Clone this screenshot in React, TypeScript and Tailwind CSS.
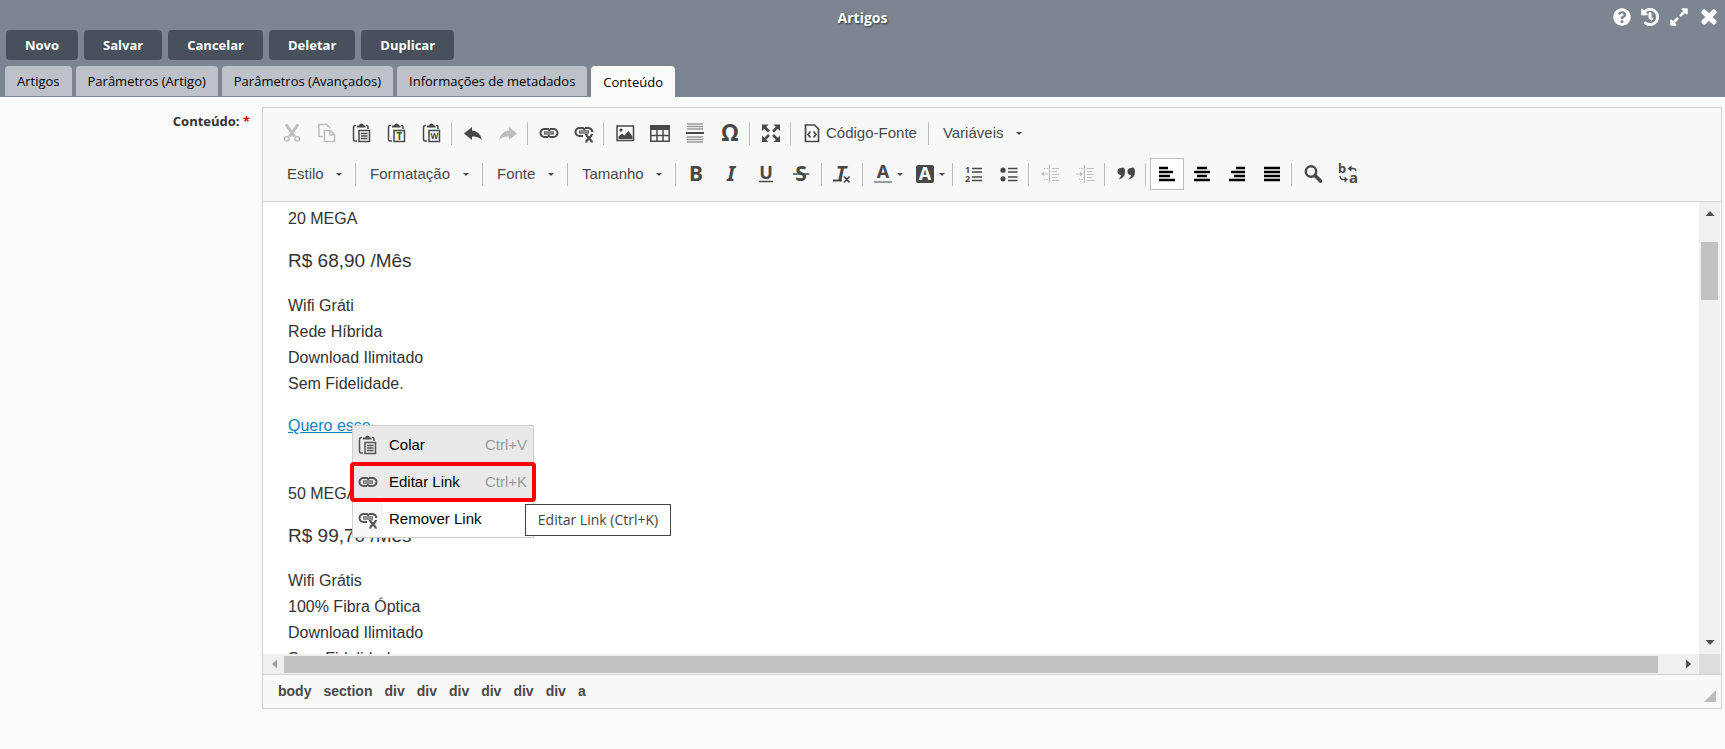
import { useState } from "react";
import type { ReactNode } from "react";
import { FaExpandAlt, FaHistory, FaQuestionCircle, FaTimes } from "react-icons/fa";

interface IconProps {
  children: ReactNode;
}

interface ToolProps {
  label: string;
  children: ReactNode;
  disabled?: boolean;
  active?: boolean;
}

const actions = ["Novo", "Salvar", "Cancelar", "Deletar", "Duplicar"];
const tabs = ["Artigos", "Parâmetros (Artigo)", "Parâmetros (Avançados)", "Informações de metadados", "Conteúdo"];
const path = ["body", "section", "div", "div", "div", "div", "div", "div", "a"];

const Icon = ({ children }: IconProps) => (
  <svg viewBox="0 0 20 20" className="h-5 w-5 shrink-0 overflow-visible" fill="none" stroke="currentColor" strokeWidth="1.5" aria-hidden="true">
    {children}
  </svg>
);

// letter icons (B, I, U, ...)
const Glyph = ({ children, italic = false, y = 16, x = 10, size = 19 }: { children: string; italic?: boolean; y?: number; x?: number; size?: number }) => (
  <text
    x={x}
    y={y}
    fontSize={size}
    textAnchor="middle"
    fontWeight="bold"
    fontStyle={italic ? "italic" : "normal"}
    fontFamily="'Noto Sans', sans-serif"
    fill="currentColor"
    stroke="none"
  >
    {children}
  </text>
);

const Clipboard = ({ children }: { children: ReactNode }) => (
  <Icon>
    <path d="M4 2.5H3.5Q1.500 2.500 1.500 4.500v12Q1.500 18 3 18h2M14 2.500h.5Q16 2.500 16 4.500V6" />
    <path d="M5 4.500V2.500h2Q7.500.5 9.500 .5t2.500 2h1.500v2z" fill="currentColor" stroke="none" />
    <path d="M7 7.500h10.500v11H7z" />
    {children}
  </Icon>
);

const PasteIcon = () => (
  <Clipboard>
    <path d="M9 10.500h6.500M9 13h6.500M9 15.500h6.500" strokeWidth="1.400" />
  </Clipboard>
);

const LinkIcon = () => (
  <Icon>
    <path d="M9 6H5.500a4 4 0 0 0 0 8H9M11 6h3.500a4 4 0 0 1 0 8H11" strokeWidth="2" />
    <path d="M8.500 6q2 .3 2 2.300M11.500 14q-2-.3-2-2.300" strokeWidth="1.800" />
    <path d="M5 10h10" strokeWidth="3.200" />
    <path d="M5.500 10h9" stroke="#ccc" strokeWidth="1" />
  </Icon>
);

const UnlinkIcon = () => (
  <Icon>
    <path d="M9 5H5.500a4 4 0 0 0 0 8H9M11 5h3.500q3.500.5 4 4" strokeWidth="2" />
    <path d="M8.500 5q2 .3 2 2.300" strokeWidth="1.800" />
    <path d="M5 9h10" strokeWidth="3.200" />
    <path d="M5.500 9h9" stroke="#ccc" strokeWidth="1" />
    <path d="M12 12l6 6.500M18 12l-6 6.500" strokeWidth="2.200" />
    <path d="M11 11.500h2.500M16.500 11.500h2.500M11 19h2.500M16.500 19h2.500" strokeWidth="1" />
  </Icon>
);

const Tool = ({ label, children, disabled, active }: ToolProps) => (
  <button
    type="button"
    title={label}
    aria-label={label}
    disabled={disabled}
    className={`flex h-8 w-[34px] shrink-0 items-center justify-center border ${
      active ? "border-[#bcbcbc] bg-white text-black" : "border-transparent"
    } ${disabled ? "text-[#bdbdbd]" : ""}`}
  >
    {children}
  </button>
);

const Sep = () => <span className="ml-px mr-[3px] h-[23px] w-px shrink-0 bg-[#bcbcbc]" />;

const Caret = () => (
  <svg viewBox="0 0 6 3" className="h-[3px] w-[6px] shrink-0" fill="currentColor" aria-hidden="true">
    <path d="M0 0h6L3 3z" />
  </svg>
);

const Combo = ({ label }: { label: string }) => (
  <div className="relative flex h-8 items-center">
    <select aria-label={label} className="h-8 cursor-default appearance-none bg-transparent pl-[10px] pr-[29px] text-[15px] leading-5 outline-none">
      <option>{label}</option>
    </select>
    <span className="pointer-events-none absolute right-[11px]">
      <Caret />
    </span>
  </div>
);

const ColorTool = ({ label, children }: { label: string; children: ReactNode }) => (
  <button type="button" title={label} aria-label={label} className="flex h-8 w-[41px] shrink-0 items-center gap-1 pl-[6px]">
    {children}
    <Caret />
  </button>
);

const lines = (d: string) => (
  <Icon>
    <path d={d} strokeWidth="2.600" />
  </Icon>
);

const MenuItem = ({ icon, label, shortcut, hover, marked }: { icon: ReactNode; label: string; shortcut?: string; hover?: boolean; marked?: boolean }) => (
  <button
    type="button"
    role="menuitem"
    className={`relative flex h-[37px] w-full items-center text-[15px] leading-5 text-black ${hover ? "bg-[#e9e9e9]" : "bg-white"} ${marked ? "z-10" : ""}`}
  >
    <span className={`flex h-full w-[30px] items-center justify-center text-[#555] ${hover ? "" : "bg-[#f8f8f8]"}`}>{icon}</span>
    <span className="pl-[6px]">{label}</span>
    <span className="ml-auto pr-[6px] text-[#9a9a9a]">{shortcut}</span>
    {marked && <span className="absolute -inset-x-[3px] -bottom-[2px] -top-px rounded-sm border-4 border-[#ff0000]" />}
  </button>
);

const ContextMenu = () => (
  <div role="menu" className="absolute left-[89px] top-[223px] w-[182px] border border-[#d1d1d1]">
    <MenuItem icon={<PasteIcon />} label="Colar" shortcut="Ctrl+V" hover />
    <MenuItem icon={<LinkIcon />} label="Editar Link" shortcut="Ctrl+K" hover marked />
    <MenuItem icon={<UnlinkIcon />} label="Remover Link" />
    <div role="tooltip" className="absolute left-[172px] top-[78px] flex h-8 w-[146px] items-center justify-center whitespace-nowrap border border-[#444] bg-white font-['Open_Sans',sans-serif] text-sm text-[#444]">
      Editar Link (Ctrl+K)
    </div>
  </div>
);

const Toolbar = () => (
  <div className="flex flex-col gap-[9px] border-b border-[#d1d1d1] bg-[#f8f8f8] pb-[11px] pt-[9px] text-[#484848]">
    <div className="flex items-center gap-px pl-3">
      <Tool label="Recortar" disabled>
        <Icon>
          <path d="M4 1.500l8.500 12M16 1.500l-8.500 12" strokeWidth="3" />
          <circle cx="4.800" cy="15.800" r="2.300" />
          <circle cx="15.200" cy="15.800" r="2.300" />
        </Icon>
      </Tool>
      <Tool label="Copiar" disabled>
        <Icon>
          <path d="M6 13.500H2V1.500h7.500L13 5M7.500 7.500h6l4 4v7h-10zM13 7.500V12h4.500" />
        </Icon>
      </Tool>
      <Tool label="Colar"><PasteIcon /></Tool>
      <Tool label="Colar como texto">
        <Clipboard><Glyph x={12.3} y={16.500} size={10}>T</Glyph></Clipboard>
      </Tool>
      <Tool label="Colar do Word">
        <Clipboard><Glyph x={12.3} y={16} size={8}>W</Glyph></Clipboard>
      </Tool>
      <Sep />
      <Tool label="Desfazer">
        <Icon><path d="M1 10.500l8-6.500v3.500q8 .5 10 9.500-4-4-10-3.500V17z" fill="currentColor" stroke="none" /></Icon>
      </Tool>
      <Tool label="Refazer" disabled>
        <Icon><path d="M19 10.500L11 4v3.500q-8 .5-10 9.500 4-4 10-3.500V17z" fill="currentColor" stroke="none" /></Icon>
      </Tool>
      <Sep />
      <Tool label="Link"><LinkIcon /></Tool>
      <Tool label="Remover link"><UnlinkIcon /></Tool>
      <Sep />
      <Tool label="Imagem">
        <Icon>
          <path d="M2 3h16.500v14.500H2z" />
          <circle cx="6" cy="7" r="1.600" fill="currentColor" stroke="none" />
          <path d="M3.500 16v-2.500L7 10.500l2.500 2L13.500 8l4 5.500V16z" fill="currentColor" stroke="none" />
        </Icon>
      </Tool>
      <Tool label="Tabela">
        <Icon>
          <path d="M.8 3h18.400v15.200H.8zM1 12.500h18M7 6v12M13 6v12" />
          <path d="M0 2h20v5H0z" fill="currentColor" stroke="none" />
        </Icon>
      </Tool>
      <Tool label="Linha horizontal">
        <Icon>
          <path d="M2 1h16M2 3.500h16M2 6h16M2 14h16M2 16.500h16M2 19h16" stroke="#9a9a9a" strokeWidth="1.400" />
          <path d="M1 10h18" strokeWidth="2" />
        </Icon>
      </Tool>
      <Tool label="Caractere especial">
        <Icon><Glyph size={23} y={18}>Ω</Glyph></Icon>
      </Tool>
      <Sep />
      <Tool label="Maximizar">
        <Icon>
          <path d="M3 3.500l5 5M17 3.500l-5 5M3 17l5-5M17 17l-5-5" strokeWidth="2.600" />
          <path d="M1 1.500h6.500L1 8zM19 1.500v6.500l-6.500-6.500zM1 19v-6.500L7.500 19zM19 19h-6.500l6.500-6.500z" fill="currentColor" stroke="none" />
        </Icon>
      </Tool>
      <Sep />
      <button type="button" className="flex h-8 items-center gap-1 pl-[7px] pr-[9px] text-[15px] leading-5">
        <Icon>
          <path d="M3.500 2h9l4 4v12.500h-13zM8.500 8.500L6 11.500l2.500 3M11.500 8.500l2.500 3-2.500 3" strokeWidth="1.700" />
        </Icon>
        Código-Fonte
      </button>
      <Sep />
      <Combo label="Variáveis" />
    </div>

    <div className="flex items-center gap-px pl-[14px]">
      <Combo label="Estilo" />
      <Sep />
      <Combo label="Formatação" />
      <Sep />
      <Combo label="Fonte" />
      <Sep />
      <Combo label="Tamanho" />
      <Sep />
      <Tool label="Negrito"><Icon><Glyph size={21} y={17} x={9}>B</Glyph></Icon></Tool>
      <Tool label="Itálico"><Icon><Glyph size={21} y={17} x={9} italic>I</Glyph></Icon></Tool>
      <Tool label="Sublinhado">
        <Icon>
          <Glyph size={18} y={14.500} x={9}>U</Glyph>
          <path d="M2 17.500h14" />
        </Icon>
      </Tool>
      <Tool label="Tachado">
        <Icon>
          <Glyph size={21} y={17} x={9}>S</Glyph>
          <path d="M1 10h16" />
        </Icon>
      </Tool>
      <Sep />
      <Tool label="Remover formatação">
        <Icon>
          <Glyph size={20} y={15.500} x={8} italic>T</Glyph>
          <path d="M0 16.500h9M11 12.500l5.500 6M16.500 12.500l-5.500 6" strokeWidth="1.800" />
        </Icon>
      </Tool>
      <Sep />
      <ColorTool label="Cor do texto">
        <Icon>
          <Glyph size={18} y={14}>A</Glyph>
          <path d="M1 18h18" stroke="#9a9a9a" strokeWidth="2" />
        </Icon>
      </ColorTool>
      <ColorTool label="Cor do fundo">
        <Icon>
          <rect x="1" y="1" width="18" height="18" rx="2" fill="currentColor" stroke="none" />
          <g className="text-[#f8f8f8]"><Glyph size={18} y={16}>A</Glyph></g>
        </Icon>
      </ColorTool>
      <Sep />
      <Tool label="Lista numerada">
        <Icon>
          <path d="M8 4.500h10M8 8h10M8 13h10M8 16.500h10" />
          <Glyph size={9} x={3.500} y={9}>1</Glyph>
          <Glyph size={9} x={3.500} y={18}>2</Glyph>
        </Icon>
      </Tool>
      <Tool label="Lista com marcadores">
        <Icon>
          <path d="M9 4.500h9.500M9 8h9.500M9 13h9.500M9 16.500h9.500" />
          <circle cx="4" cy="6.200" r="2.600" fill="currentColor" stroke="none" />
          <circle cx="4" cy="14.800" r="2.600" fill="currentColor" stroke="none" />
        </Icon>
      </Tool>
      <Sep />
      <Tool label="Diminuir recuo" disabled>
        <Icon>
          <path d="M9.500 1v18M12 4.500h7M12 7.500h5M12 10.500h7M12 13.500h5M12 16.500h7M2 10h6" strokeWidth="1.200" />
          <path d="M4 4.500h4M4 15.500h4" strokeDasharray="1.500 1" strokeWidth="1.200" />
          <path d="M1 10l3-2.500v5z" fill="currentColor" stroke="none" />
        </Icon>
      </Tool>
      <Tool label="Aumentar recuo" disabled>
        <Icon>
          <path d="M9.500 1v18M12 4.500h7M12 7.500h5M12 10.500h7M12 13.500h5M12 16.500h7M1 10h5" strokeWidth="1.200" />
          <path d="M4 4.500h4M4 15.500h4" strokeDasharray="1.500 1" strokeWidth="1.200" />
          <path d="M8 10L5 7.500v5z" fill="currentColor" stroke="none" />
        </Icon>
      </Tool>
      <Sep />
      <Tool label="Citação">
        <Icon>
          <path d="M5 4a3.500 3.500 0 1 0 0 7q0 2.500-2.500 4.500Q9 14 9 8T5 4zM15 4a3.500 3.500 0 1 0 0 7q0 2.500-2.500 4.500Q19 14 19 8T15 4z" fill="currentColor" stroke="none" />
        </Icon>
      </Tool>
      <Sep />
      <Tool label="Alinhar à esquerda" active>{lines("M2 4h9M2 8h14M2 12h11M2 16h16")}</Tool>
      <div className="flex gap-px text-black">
        <Tool label="Centralizar">{lines("M5 4h10M2 8h16M5 12h10M2 16h16")}</Tool>
        <Tool label="Alinhar à direita">{lines("M9 4h9M4 8h14M7 12h11M2 16h16")}</Tool>
        <Tool label="Justificado">{lines("M2 4h16M2 8h16M2 12h16M2 16h16")}</Tool>
      </div>
      <Sep />
      <Tool label="Localizar">
        <Icon>
          <circle cx="8" cy="7.500" r="5.200" strokeWidth="2.400" />
          <path d="M12 11.500l5.500 5.500" strokeWidth="3.600" strokeLinecap="round" />
        </Icon>
      </Tool>
      <Tool label="Substituir">
        <Icon>
          <Glyph size={13} x={4} y={9}>b</Glyph>
          <Glyph size={15} x={15.500} y={19}>a</Glyph>
          <path d="M12 4.500h3.500Q17.500 4.500 18 7M2 12q.5 3.500 3 3.500h2" />
          <path d="M9.500 4.500l4-3v6zM10 15.500l-3.500-3v6z" fill="currentColor" stroke="none" />
        </Icon>
      </Tool>
    </div>
  </div>
);

const Arrow = ({ d, dim }: { d: string; dim?: boolean }) => (
  <svg viewBox="0 0 10 10" className={`h-[10px] w-[10px] ${dim ? "text-[#a3a3a3]" : "text-[#505050]"}`} fill="currentColor" aria-hidden="true">
    <path d={d} />
  </svg>
);

const Document = () => (
  <div className="h-full overflow-hidden pl-[25px] pt-1 text-base leading-[26px] text-[#333]">
    <p>20 MEGA</p>
    <p className="mt-4 text-[19px] leading-[26px]">R$ 68,90 /Mês</p>
    <p className="mt-[19px]">
      Wifi Gráti<br />Rede Híbrida<br />Download Ilimitado<br />Sem Fidelidade.
    </p>
    <p className="mt-4">
      <a href="#quero" className="text-[#0782c1] underline">Quero esse</a>
    </p>
    <p className="mt-[42px]">50 MEGA</p>
    <p className="mt-4 text-[19px] leading-[26px]">R$ 99,70 /Mês</p>
    <p className="mt-[19px]">
      Wifi Grátis<br />100% Fibra Óptica<br />Download Ilimitado<br />Sem Fidelidade.
    </p>
  </div>
);

const Editor = () => (
  <div className="mr-[3px] min-w-0 flex-1 border border-[#d1d1d1] font-['Liberation_Sans',Arial,sans-serif]">
    <Toolbar />
    <div className="flex h-[452px] bg-white">
      <div className="relative min-w-0 flex-1">
        <Document />
        <ContextMenu />
      </div>
      <div className="mr-px flex w-[21px] flex-col items-center bg-[#f0f0f0] py-[6px]">
        <Arrow d="M.5 8L5 3l4.500 5z" />
        <div className="mt-6 h-[58px] w-[17px] bg-[#c1c1c1]" />
        <div className="flex-1" />
        <Arrow d="M.5 2L5 7l4.500-5z" />
      </div>
    </div>
    <div className="flex h-5 bg-[#f0f0f0]">
      <div className="flex flex-1 items-center pr-[6px]">
        <div className="flex w-[21px] justify-center">
          <Arrow d="M8 .5L3 5l5 4.500z" dim />
        </div>
        <div className="h-[17px] flex-1 bg-[#c1c1c1]" />
        <div className="w-[25px]" />
        <Arrow d="M3 .5L8 5 3 9.500z" />
      </div>
      <div className="mr-px w-[21px] bg-[#dcdcdc]" />
    </div>
    <div className="flex h-[34px] items-center gap-3 border-t border-[#d1d1d1] bg-[#f8f8f8] pb-px pl-[15px] pr-[5px] text-sm font-bold text-[#484848]">
      {path.map((tag, i) => (
        <a key={i} href={`#${tag}`}>{tag}</a>
      ))}
      <svg viewBox="0 0 12 12" className="mb-[5px] ml-auto h-3 w-3 self-end" fill="#bcbcbc" aria-hidden="true">
        <path d="M12 0v12H0z" />
      </svg>
    </div>
  </div>
);

export default function App() {
  const [tab, setTab] = useState("Conteúdo");

  return (
    <div className="min-h-screen bg-[#fafafa] font-['Open_Sans',sans-serif] text-[13px] leading-5">
      <header className="bg-[#7d8690]">
        <div className="grid h-[30px] grid-cols-[1fr_auto_1fr] items-center pt-1">
          <h1 className="col-start-2 pt-[2px] text-sm font-bold text-white [text-shadow:1px_1px_2px_#333]">Artigos</h1>
          <div className="flex items-center justify-end gap-[10px] pr-[6px] text-white">
            <button type="button" aria-label="Ajuda"><FaQuestionCircle size={18} /></button>
            <button type="button" aria-label="Histórico"><FaHistory size={18} stroke="currentColor" strokeWidth={20} /></button>
            <button type="button" aria-label="Expandir"><FaExpandAlt size={20} /></button>
            <button type="button" aria-label="Fechar"><FaTimes size={20} stroke="currentColor" strokeWidth={40} /></button>
          </div>
        </div>
        <div className="flex gap-[6px] pl-[6px]">
          {actions.map((a) => (
            <button key={a} type="button" className="h-[30px] rounded-sm bg-[#47505b] px-[19px] font-bold text-white">
              {a}
            </button>
          ))}
        </div>
        <nav className="flex h-[37px] items-start gap-1 pl-[5px] pt-[6px]">
          {tabs.map((t) => (
            <button
              key={t}
              type="button"
              onClick={() => setTab(t)}
              className={`rounded-t px-3 text-black ${t === tab ? "h-[31px] bg-[#fafafa]" : "h-[30px] bg-[#bdc2ca]"}`}
            >
              {t}
            </button>
          ))}
        </nav>
      </header>
      <main className="flex pt-[10px]">
        <div className="w-[262px] shrink-0 pr-3 pt-1 text-right font-bold text-[#333]">
          Conteúdo: <span className="text-[#ff0000]">*</span>
        </div>
        <Editor />
      </main>
    </div>
  );
}
